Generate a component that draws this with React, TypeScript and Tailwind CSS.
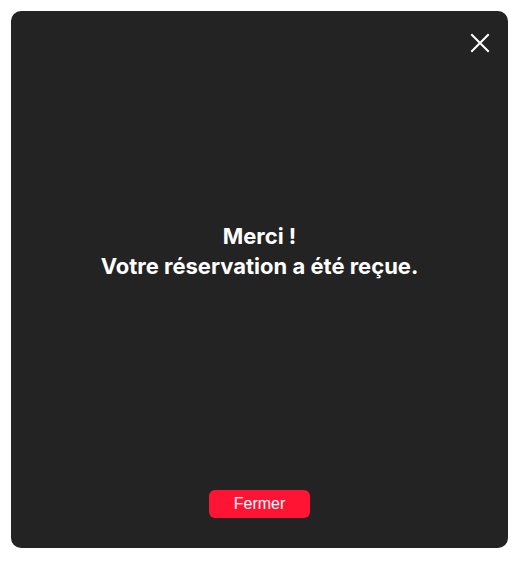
import React from "react";

export default function App() {
  return (
    <div className="w-[525px] h-[565px] bg-white p-[11px] pr-[17px] pb-[17px]">
      <div className="relative w-[497px] h-[537px] bg-[#232323] rounded-[10px] flex flex-col items-center">
        <button className="absolute right-[18px] top-[22px] w-[20px] h-[20px] flex items-center justify-center">
          <svg width="20" height="20" viewBox="0 0 20 20" fill="none" stroke="#ffffff" strokeWidth="2" strokeLinecap="square">
            <path d="M2 2L18 18M18 2L2 18" />
          </svg>
        </button>
        <div className="flex-1 flex items-center justify-center">
          <p
            className="text-white text-[22px] leading-[30px] font-bold text-center"
            style={{ fontFamily: "Inter, 'Noto Sans', sans-serif" }}
          >
            Merci !<br />
            Votre réservation a été reçue.
          </p>
        </div>
        <button
          className="mb-[30px] w-[101px] h-[28px] rounded-[6px] bg-[#ff1533] text-white text-[16px] leading-[28px]"
          style={{ fontFamily: "'Liberation Sans', Arial, sans-serif" }}
        >
          Fermer
        </button>
      </div>
    </div>
  );
}
